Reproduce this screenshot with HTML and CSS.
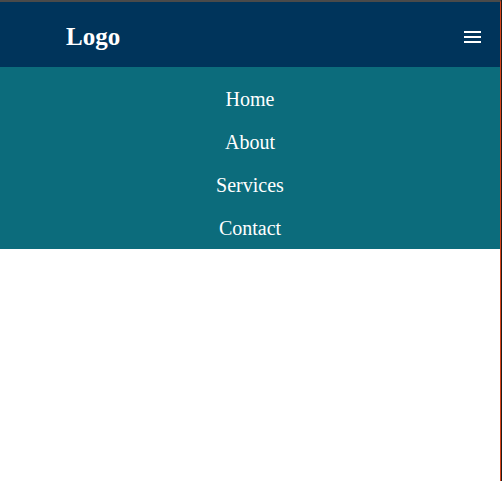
FILE: index.html
```html
<!DOCTYPE html>
<html lang="en">
<head>
<meta charset="utf-8">
<title>Logo</title>
<link rel="stylesheet" href="styles.css">
</head>
<body>
<div class="page">
  <header class="topbar">
    <div class="logo">Logo</div>
    <button class="burger" aria-label="Menu">
      <span></span><span></span><span></span>
    </button>
  </header>
  <nav class="menu">
    <ul>
      <li><a href="#">Home</a></li>
      <li><a href="#">About</a></li>
      <li><a href="#">Services</a></li>
      <li><a href="#">Contact</a></li>
    </ul>
  </nav>
</div>
</body>
</html>
```
FILE: styles.css
```css
html, body {
  margin: 0;
  padding: 0;
  background: #ffffff;
}
body {
  font-family: "Liberation Serif", "Times New Roman", serif;
}
.page {
  width: 501px;
  min-height: 481px;
  box-sizing: border-box;
  border-top: 2px solid #4a4a4a;
  border-right: 1px solid #d8461c;
  box-shadow: 1px 0 0 #1c1c1c;
}
.topbar {
  height: 65px;
  background: #00345b;
  display: flex;
  align-items: center;
  justify-content: space-between;
  padding: 0 19px 0 66px;
}
.logo {
  color: #ffffff;
  font-weight: bold;
  font-size: 25px;
  margin-top: 4px;
}
.burger {
  background: none;
  border: 0;
  padding: 0;
  width: 17px;
  display: flex;
  flex-direction: column;
  gap: 3px;
  margin-top: 4px;
}
.burger span {
  display: block;
  height: 2px;
  background: #ffffff;
}
.menu {
  background: #0c6c7c;
}
.menu ul {
  list-style: none;
  margin: 0;
  padding: 10px 0 0;
}
.menu li {
  text-align: center;
  height: 43px;
  line-height: 45px;
}
.menu a {
  color: #ffffff;
  text-decoration: none;
  font-size: 20px;
}
```
